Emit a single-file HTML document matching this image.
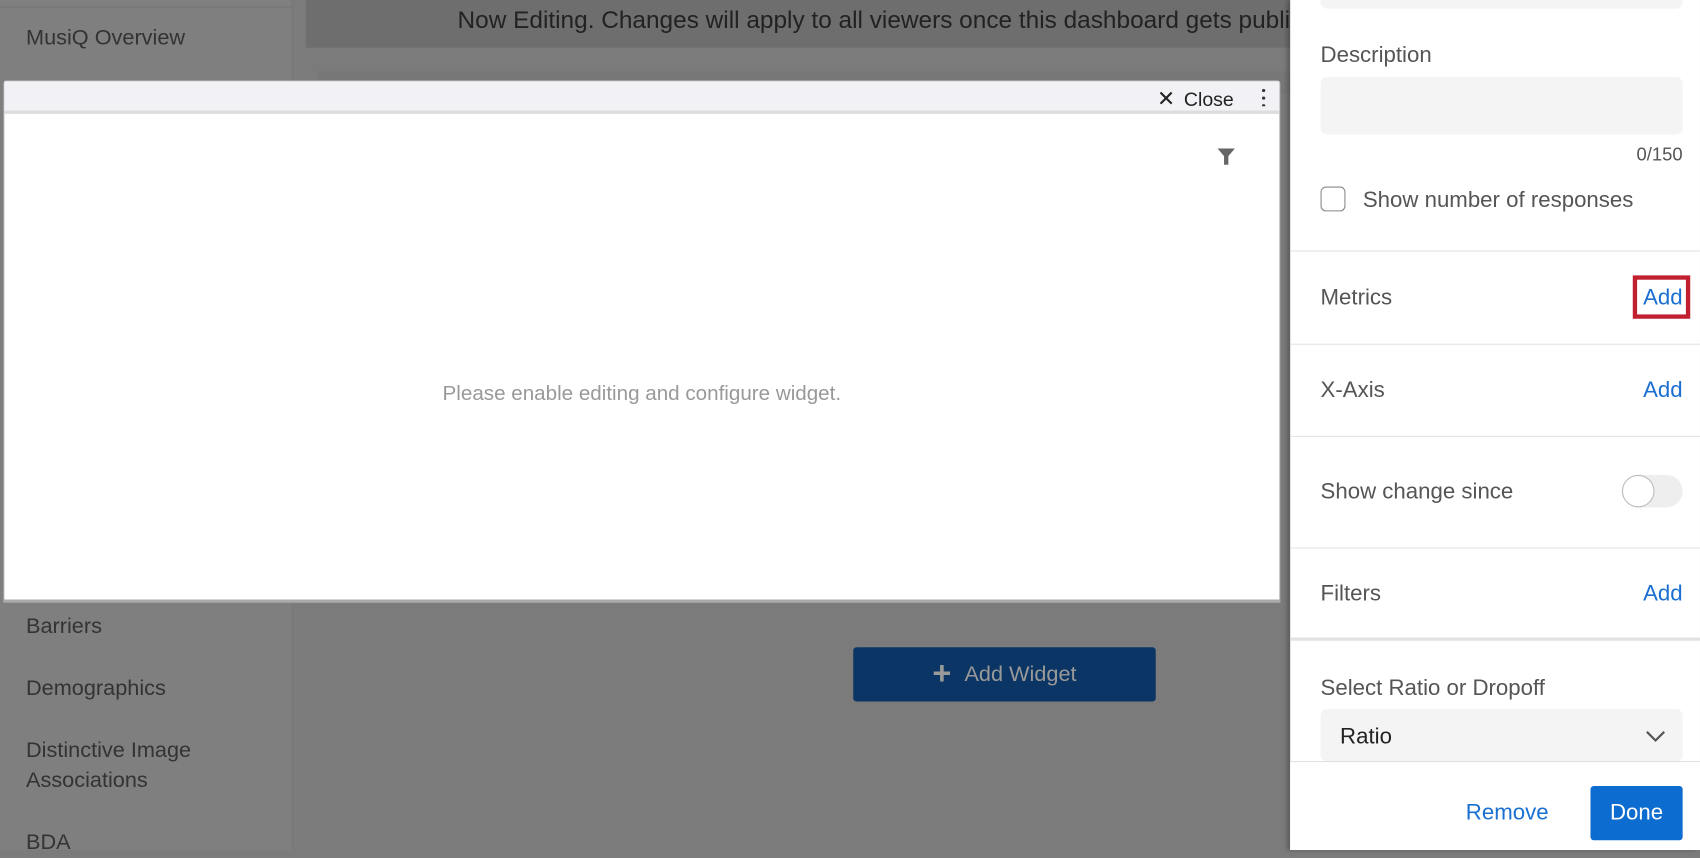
<!DOCTYPE html>
<html><head><meta charset="utf-8"><style>
*{box-sizing:border-box;margin:0;padding:0}
html,body{width:1700px;height:850px;overflow:hidden;background:#7b7b7b;font-family:"Liberation Sans","DejaVu Sans",sans-serif}
#s{position:absolute;left:0;top:0;width:1568px;height:784px;transform:scale(1.08418);transform-origin:0 0;background:#7b7b7b}
.abs{position:absolute}
.side{left:0;top:0;width:270px;height:784px;background:#7f7f7f;border-right:1px solid #777}
.side div{position:absolute;left:24px;font-size:20px;color:#333;line-height:28px}
.panel{left:1190px;top:0;width:378px;height:784px;background:#fff;box-shadow:-3px 0 4px rgba(0,0,0,.25)}
.lbl{position:absolute;left:28px;font-size:20.5px;color:#555}
.add{position:absolute;right:16px;font-size:20.5px;color:#1a6fd1}
.hr{position:absolute;left:0;right:0;height:1px;background:#e2e2e2}
</style></head><body><div id="s">
<div class="abs side">
<div style="top:0;left:0;width:270px;height:7px;border-bottom:1px solid #747474"></div>
<div style="top:21px">MusiQ Overview</div>
<div style="top:564px">Barriers</div>
<div style="top:621px">Demographics</div>
<div style="top:678px">Distinctive Image<br>Associations</div>
<div style="top:763px">BDA</div>
</div>
<div class="abs" style="left:282px;top:0;width:920px;height:44px;background:#6e6e6e;color:#222;font-size:22.5px;line-height:38px;white-space:nowrap;padding-left:140px;overflow:hidden">Now Editing. Changes will apply to all viewers once this dashboard gets published.</div>
<div class="abs" style="left:293px;top:66px;width:900px;height:20px;background:#777"></div>
<div class="abs" style="left:3px;top:74px;width:1178px;height:482px;background:#fff;border:1px solid #aaa;border-bottom:3px solid #aaa;border-radius:3px 3px 0 0">
<div style="height:30px;background:#f2f2f6;border-bottom:3px solid #ddd;position:relative">
<span style="position:absolute;right:42px;top:4px;font-size:18px;color:#222"><b style="font-size:20px;margin-right:8px">✕</b>Close</span>
<span style="position:absolute;right:13px;top:5px;width:3px;height:18px;background:radial-gradient(circle,#333 1.4px,transparent 1.6px) 0 0/3px 7px repeat-y"></span>
</div>
<svg class="abs" style="left:1118px;top:61px" width="18" height="18" viewBox="0 0 18 18"><path d="M1 1H17L11 8V16H7V8Z" fill="#666"/></svg>
<div class="abs" style="left:0;right:0;top:278px;text-align:center;font-size:19px;color:#999">Please enable editing and configure widget.</div>
</div>
<div class="abs" style="left:787px;top:597px;width:279px;height:50px;background:#0b3564;border-radius:3px;color:#999;font-size:20px;text-align:center;line-height:50px"><span style="font-size:30px;font-weight:bold;vertical-align:-3px;margin-right:12px">+</span>Add Widget</div>
<div class="abs panel">
<div style="position:absolute;left:28px;right:16px;top:-10px;height:18px;background:#f4f4f4;border-radius:6px"></div>
<div class="lbl" style="top:39px">Description</div>
<div style="position:absolute;left:28px;right:16px;top:71px;height:53px;background:#f4f4f4;border-radius:6px"></div>
<div style="position:absolute;right:16px;top:133px;font-size:17px;color:#555">0/150</div>
<div style="position:absolute;left:28px;top:172px;width:23px;height:23px;border:1.5px solid #888;border-radius:5px"></div>
<div class="lbl" style="left:67px;top:173px">Show number of responses</div>
<div class="hr" style="top:231px"></div>
<div class="lbl" style="top:263px">Metrics</div>
<div style="position:absolute;right:9px;top:254px;width:53px;height:40px;border:4px solid #c0202f"></div>
<div class="add" style="top:263px">Add</div>
<div class="hr" style="top:317px"></div>
<div class="lbl" style="top:348px">X-Axis</div>
<div class="add" style="top:348px">Add</div>
<div class="hr" style="top:402px"></div>
<div class="lbl" style="top:442px">Show change since</div>
<div style="position:absolute;right:16px;top:438px;width:56px;height:30px;background:#eee;border-radius:15px"><div style="width:30px;height:30px;border-radius:50%;background:#fff;border:1.5px solid #bbb"></div></div>
<div class="hr" style="top:505px"></div>
<div class="lbl" style="top:536px">Filters</div>
<div class="add" style="top:536px">Add</div>
<div class="hr" style="top:588px;height:3px"></div>
<div class="lbl" style="top:623px">Select Ratio or Dropoff</div>
<div style="position:absolute;left:28px;right:16px;top:654px;height:48px;background:#f4f4f4;border-radius:6px">
<span style="position:absolute;left:18px;top:14px;font-size:20.5px;color:#222">Ratio</span>
<svg style="position:absolute;right:16px;top:19px" width="18" height="12" viewBox="0 0 18 12"><path d="M1 2L9 10L17 2" stroke="#555" stroke-width="2" fill="none"/></svg>
</div>
<div class="hr" style="top:702px;background:#ddd"></div>
<div style="position:absolute;left:0;right:0;top:703px;bottom:0;background:#fff"></div>
<div style="position:absolute;left:162px;top:738px;font-size:20.5px;color:#1a6fd1">Remove</div>
<div style="position:absolute;right:16px;top:725px;width:85px;height:50px;background:#0d6ccf;border-radius:3px;color:#fff;font-size:20.5px;text-align:center;line-height:50px">Done</div>
</div>
</div></body></html>
